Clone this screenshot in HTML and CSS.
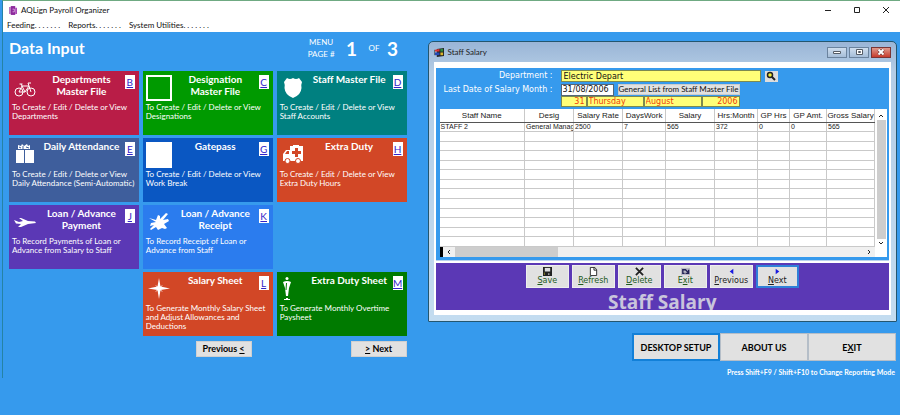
FILE: index.html
```html
<!DOCTYPE html>
<html lang="en">
<head>
<meta charset="utf-8">
<title>AQLign Payroll Organizer</title>
<link rel="stylesheet" href="styles.css">
</head>
<body>
<div class="app">
  <header class="titlebar">
    <svg class="app-icon" viewBox="0 0 9 10"><path fill="#b67bc0" d="M0 1h2v8H0z"/><path fill="#8d2a9c" d="M2 0h5v10H2z"/><path fill="#a846b5" d="M7 2h2v7H7z"/><path fill="none" stroke="#d9a8e0" d="M4 3.500h2v3H4"/></svg>
    <span class="app-name">AQLign Payroll Organizer</span>
    <button class="caption" aria-label="Minimize"><svg viewBox="0 0 8 8"><path d="M1 4.500h6"/></svg></button>
    <button class="caption" aria-label="Maximize"><svg viewBox="0 0 8 8"><path d="M1.500 1.500h5v5h-5z"/></svg></button>
    <button class="caption" aria-label="Close"><svg viewBox="0 0 8 8"><path d="M1 1l6 6M7 1l-6 6"/></svg></button>
  </header>
  <nav class="menubar">
    <a href="#feeding">Feeding. . . . . . .</a><a href="#reports">Reports. . . . . . .</a><a href="#utilities">System Utilities. . . . . . .</a>
  </nav>
  <main class="desktop">
    <section class="menu">
      <div class="menu-head">
        <h1>Data Input</h1>
        <div class="page-label">MENU<br>PAGE #</div>
        <b class="page-num">1</b>
        <span class="page-of">OF</span>
        <b class="page-num">3</b>
      </div>
      <div class="tiles">
        <article class="tile crimson">
          <svg class="tile-icon" viewBox="0 0 26 26"><g fill="none" stroke="#fff"><circle cx="7" cy="17" r="4"/><circle cx="19" cy="17" r="4"/><path d="M7 17l3-6h7l-4 6H7M13 17l-4-8M7.500 9h3M19 17l-3-9h3"/></g></svg>
          <h2>Departments<br>Master File</h2><a class="key" href="#b">B</a>
          <p>To Create / Edit / Delete or View<br>Departments</p>
        </article>
        <article class="tile green">
          <svg class="tile-icon" viewBox="0 0 26 26"><path fill="none" stroke="#fff" stroke-width="2" d="M1 1h24v24H1z"/></svg>
          <h2>Designation<br>Master File</h2><a class="key" href="#c">C</a>
          <p>To Create / Edit / Delete or View<br>Designations</p>
        </article>
        <article class="tile teal">
          <svg class="tile-icon" viewBox="0 0 26 26"><path fill="#fff" d="M7 3q3 2 6 0 3 2 6 0l3 4q-1 2-.5 6-.5 7-8.500 10Q5 20 4.500 13 5 9 4 7z"/></svg>
          <h2>Staff Master File</h2><a class="key" href="#d">D</a>
          <p>To Create / Edit / Delete or View<br>Staff Accounts</p>
        </article>
        <article class="tile slate">
          <svg class="tile-icon" viewBox="0 0 26 26"><path fill="#fff" d="M4 8h8v13H4zM13 8h9v13h-9zM6 3l3 1 1-2 2 2 3-2 1 2 2-1v4H6z"/><path stroke="#3e5e9c" fill="none" d="M7 5l2 1M11 4v3M14 5l3 1"/></svg>
          <h2>Daily Attendance</h2><a class="key" href="#e">E</a>
          <p>To Create / Edit / Delete or View<br>Daily Attendance (Semi-Automatic)</p>
        </article>
        <article class="tile blue">
          <svg class="tile-icon" viewBox="0 0 26 26"><path fill="#fff" d="M0 0h26v26H0z"/></svg>
          <h2>Gatepass</h2><a class="key" href="#g">G</a>
          <p>To Create / Edit / Delete or View<br>Work Break</p>
        </article>
        <article class="tile orange">
          <svg class="tile-icon" viewBox="0 0 26 26"><path fill="#fff" d="M10 4h3V3h6v1h4v15H3v-7l3-4h4z"/><path fill="#d24726" d="M15 6h3v3h3v3h-3v3h-3v-3h-3V9h3zM5 12l2-3h2v3z"/><circle cx="7.500" cy="19" r="2.500" fill="#fff" stroke="#d24726"/><circle cx="18" cy="19" r="2.500" fill="#fff" stroke="#d24726"/></svg>
          <h2>Extra Duty</h2><a class="key" href="#h">H</a>
          <p>To Create / Edit / Delete or View<br>Extra Duty Hours</p>
        </article>
        <article class="tile violet">
          <svg class="tile-icon" viewBox="0 0 26 26"><path fill="#fff" d="M2 11l5 2 4-1-4-3h2l7 3 7 .5 1 1.500-8 1-7 3h-3l3-3-5-.5z"/></svg>
          <h2>Loan / Advance<br>Payment</h2><a class="key" href="#j">J</a>
          <p>To Record Payments of Loan or<br>Advance from Salary to Staff</p>
        </article>
        <article class="tile azure">
          <svg class="tile-icon" viewBox="0 0 26 26"><path fill="#fff" d="M3 9l7 2 2-5 2 1v3l6-6 2 1-5 6 5-1 1 2-5 3 3 4-2 1-3-1-4 2-2-3-5 3-1-1 4-4-4 1 1-3 5-1z"/></svg>
          <h2>Loan / Advance<br>Receipt</h2><a class="key" href="#k">K</a>
          <p>To Record Receipt of Loan or<br>Advance from Staff</p>
        </article>
        <article class="tile orange salary">
          <svg class="tile-icon" viewBox="0 0 26 26"><path fill="#fff" d="M13 2l1.500 8.500L24 12.500 14.500 14 13 23l-1.500-9L2 12.500l9.500-2z"/><path stroke="#fff" d="M10 9.500l6 6M16 9.500l-6 6"/></svg>
          <h2>Salary Sheet</h2><a class="key" href="#l">L</a>
          <p>To Generate Monthly Salary Sheet<br>and Adjust Allowances and<br>Deductions</p>
        </article>
        <article class="tile forest">
          <svg class="tile-icon" viewBox="0 0 26 26"><circle cx="7" cy="2.500" r="1.500" fill="#fff"/><path fill="#fff" d="M3 6q4-2 8 0l-2 6-1 8H6l-1-8zM6 22h2v1h2v1H4v-1h2z"/><path stroke="#007a00" d="M6.500 7l-.5 7"/></svg>
          <h2>Extra Duty Sheet</h2><a class="key" href="#m">M</a>
          <p>To Generate Monthly Overtime<br>Paysheet</p>
        </article>
      </div>
      <div class="pager">
        <button>Previous <u>&lt;</u></button>
        <button><u>&gt;</u> Next</button>
      </div>
    </section>

    <div class="side">
      <section class="window">
        <div class="win-title">
          <svg class="win-icon" viewBox="0 0 12 10"><path fill="#222" d="M3 1l8-1v9l-8 1z"/><path fill="#d33" d="M1 2l5-1v3H1z"/><path fill="#2b8a3e" d="M7 1h3v3H7z"/><path fill="#2449b5" d="M1 5h5v3H1z"/><path fill="#d9b62a" d="M7 5h3v3H7z"/><path stroke="#222" d="M0 2v6"/></svg>
          <span>Staff Salary</span>
          <button class="ctl" aria-label="Minimize"><svg viewBox="0 0 10 8"><path fill="#fff" stroke="#555c66" d="M1.500 3.500h7v2h-7z"/></svg></button>
          <button class="ctl" aria-label="Restore"><svg viewBox="0 0 10 8"><path fill="#fff" stroke="#555c66" d="M2.500 1.500h6v5h-6zM4.500 3.500h2v1h-2z"/></svg></button>
          <button class="ctl close" aria-label="Close"><svg viewBox="0 0 10 8"><path fill="none" stroke="#5a2a2a" stroke-width="3" d="M2.500 1.500l5 5M7.500 1.500l-5 5"/><path fill="none" stroke="#fff" stroke-width="2" d="M2.500 1.500l5 5M7.500 1.500l-5 5"/></svg></button>
        </div>
        <div class="win-body">
          <div class="form-panel">
            <form class="fields">
              <label for="dept">Department :</label>
              <div class="line">
                <input id="dept" class="yellow dept" value="Electric Depart">
                <button type="button" class="find" aria-label="Find"><svg viewBox="0 0 12 10"><circle cx="5" cy="4" r="2.500" fill="#f5ee30" stroke="#222" stroke-width="1.500"/><path stroke="#222" stroke-width="2" d="M7 6l3 3"/></svg></button>
              </div>
              <label for="date">Last Date of Salary Month :</label>
              <div class="line">
                <input id="date" class="date" value="31/08/2006">
                <button type="button" class="list">General List from Staff Master File</button>
              </div>
              <div class="line parts">
                <input class="yellow right" aria-label="Day" value="31"><input class="yellow" aria-label="Weekday" value="Thursday"><input class="yellow" aria-label="Month" value="August"><input class="yellow right" aria-label="Year" value="2006">
              </div>
            </form>
            <div class="grid">
              <table>
                <colgroup><col class="c-name"><col class="c-desig"><col class="c-rate"><col class="c-days"><col class="c-salary"><col class="c-hrs"><col class="c-gph"><col class="c-gpa"><col class="c-gross"></colgroup>
                <thead><tr><th>Staff Name</th><th>Desig</th><th>Salary Rate</th><th>DaysWork</th><th>Salary</th><th>Hrs:Month</th><th>GP Hrs</th><th>GP Amt.</th><th>Gross Salary</th></tr></thead>
                <tbody>
                  <tr><td>STAFF 2</td><td>General Manag</td><td>2500</td><td>7</td><td>565</td><td>372</td><td>0</td><td>0</td><td>565</td></tr>
                  <tr><td></td><td></td><td></td><td></td><td></td><td></td><td></td><td></td><td></td></tr>
                  <tr><td></td><td></td><td></td><td></td><td></td><td></td><td></td><td></td><td></td></tr>
                  <tr><td></td><td></td><td></td><td></td><td></td><td></td><td></td><td></td><td></td></tr>
                  <tr><td></td><td></td><td></td><td></td><td></td><td></td><td></td><td></td><td></td></tr>
                  <tr><td></td><td></td><td></td><td></td><td></td><td></td><td></td><td></td><td></td></tr>
                  <tr><td></td><td></td><td></td><td></td><td></td><td></td><td></td><td></td><td></td></tr>
                  <tr><td></td><td></td><td></td><td></td><td></td><td></td><td></td><td></td><td></td></tr>
                  <tr><td></td><td></td><td></td><td></td><td></td><td></td><td></td><td></td><td></td></tr>
                  <tr><td></td><td></td><td></td><td></td><td></td><td></td><td></td><td></td><td></td></tr>
                  <tr><td></td><td></td><td></td><td></td><td></td><td></td><td></td><td></td><td></td></tr>
                  <tr><td></td><td></td><td></td><td></td><td></td><td></td><td></td><td></td><td></td></tr>
                  <tr><td></td><td></td><td></td><td></td><td></td><td></td><td></td><td></td><td></td></tr>
                </tbody>
              </table>
              <div class="vbar">
                <svg viewBox="0 0 8 8"><path d="M2 5l2-2 2 2"/></svg>
                <div class="vthumb"></div>
                <svg viewBox="0 0 8 8"><path d="M2 3l2 2 2-2"/></svg>
              </div>
              <div class="hbar">
                <div class="split"></div>
                <svg viewBox="0 0 8 8"><path d="M5 2L3 4l2 2"/></svg>
                <div class="hthumb"></div>
                <svg class="end" viewBox="0 0 8 8"><path d="M3 2l2 2-2 2"/></svg>
              </div>
            </div>
          </div>
          <div class="actions-panel">
            <div class="actions">
              <button><svg viewBox="0 0 10 10"><path fill="#222" d="M0 0h10v10H0z"/><path fill="#ddd" d="M2 1h6v4H2z"/><path fill="#8a8428" d="M1 6h1v3H1z"/><path fill="#eee" d="M6 7h1v2H6z"/></svg><span><u>S</u>ave</span></button>
              <button><svg viewBox="0 0 10 10"><path fill="#fff" stroke="#222" d="M1.500.5h5l2 2.500v6.500h-7zM5.500.5v3h3"/></svg><span><u>R</u>efresh</span></button>
              <button><svg viewBox="0 0 10 10"><path stroke="#222" stroke-width="2" d="M1 1l8 8M9 1L1 9"/></svg><span><u>D</u>elete</span></button>
              <button><svg viewBox="0 0 10 10"><path fill="#b8b8c4" d="M0 1h10v8H0z"/><path fill="none" stroke="#225" stroke-width="1.500" d="M4 7H2V3h3l3 3M8.500 3v4H5"/></svg><span>E<u>x</u>it</span></button>
              <button class="dark"><svg viewBox="0 0 10 10"><path fill="#1a1ae0" d="M7 2v6L3 5z"/></svg><span><u>P</u>revious</span></button>
              <button class="dark focus"><svg viewBox="0 0 10 10"><path fill="#1a1ae0" d="M3 2v6l4-3z"/></svg><span><u>N</u>ext</span></button>
            </div>
            <div class="caption-text">Staff Salary</div>
          </div>
        </div>
      </section>
      <div class="bottom-buttons">
        <button class="selected">DESKTOP SETUP</button>
        <button>ABOUT US</button>
        <button>E<u>X</u>IT</button>
      </div>
      <p class="hint">Press Shift+F9 / Shift+F10 to Change Reporting Mode</p>
    </div>
  </main>
</div>
</body>
</html>
```
FILE: styles.css
```css
* { box-sizing: border-box; }

body {
  margin: 0;
  background: #369aed;
  font-family: Lato, "Open Sans", sans-serif;
  color: #fff;
}

button, input { font: inherit; margin: 0; padding: 0; border-radius: 0; }
h1, h2, p { margin: 0; }
svg { display: block; }

.app {
  margin-left: 2px;
  border-left: 1px solid #2583a5;
  border-top: 1px solid #6faa82;
}

.titlebar {
  display: flex;
  align-items: center;
  height: 18px;
  padding-left: 6px;
  background: #fff;
  color: #111;
  font-size: 8px;
}
.app-icon { width: 8px; height: 9px; }
.app-name { flex: 1; padding-left: 4px; }
.caption {
  width: 29px;
  height: 18px;
  border: 0;
  background: none;
}
.caption svg { width: 8px; height: 8px; margin: 0 auto; fill: none; stroke: #222; }

.menubar {
  display: flex;
  gap: 8px;
  height: 13px;
  padding-left: 4px;
  background: #fff;
  font-size: 8px;
  line-height: 13px;
}
.menubar a { color: #111; text-decoration: none; }

.desktop {
  display: grid;
  grid-template-columns: minmax(0, 398fr) minmax(0, 470fr);
  column-gap: 21px;
  padding: 0 3px 0 6px;
}

.menu-head {
  display: flex;
  align-items: center;
  height: 39px;
  padding-bottom: 7px;
}
.menu-head h1 { flex: 1; font-size: 16px; line-height: 20px; }
.page-label { font-size: 8px; line-height: 12px; text-align: center; }
.page-num { width: 34px; font-size: 19px; text-align: center; }
.page-of { width: 10px; font-size: 8px; }
.page-num:last-child { width: 28px; }

.tiles {
  display: grid;
  grid-template-columns: repeat(3, minmax(0, 1fr));
  grid-auto-rows: 64px;
  gap: 3px 4px;
}
.tile {
  display: grid;
  grid-template-columns: 26px minmax(0, 1fr) 10px;
  grid-template-rows: 29px auto;
  column-gap: 4px;
  padding: 2px 4px 0 3px;
}
.tile-icon { width: 26px; height: 26px; margin-top: 2px; }
.tile h2 { font-size: 10px; line-height: 12px; text-align: center; white-space: nowrap; }
.tile p { grid-column: 1 / -1; font-size: 8px; line-height: 9px; padding-top: 1px; white-space: nowrap; }
.key {
  height: 14px;
  margin-top: 2px;
  background: #fff;
  color: #3323c8;
  font-size: 10px;
  line-height: 14px;
  text-align: center;
}
.salary { grid-column: 2; }
.crimson { background: #b91d47; }
.green { background: #009a00; }
.teal { background: #008080; }
.slate { background: #3e5e9c; }
.blue { background: #0a57c2; }
.orange { background: #d24726; }
.violet { background: #5b38b5; }
.azure { background: #2b7cee; }
.forest { background: #007a00; }

.pager { display: flex; justify-content: flex-end; gap: 99px; padding-top: 5px; }
.pager button {
  width: 56px;
  height: 16px;
  border: 1px solid #d0d0d0;
  background: #e1e1e1;
  color: #000;
  font-size: 9px;
  font-weight: bold;
  line-height: 14px;
}

.window {
  margin-top: 9px;
  padding: 0 5px 6px;
  border: 1px solid #24566f;
  border-radius: 5px 5px 1px 1px;
  background: linear-gradient(#9ab5d6, #b4cde6 30px, #c3dcf0);
}
.win-title {
  display: flex;
  align-items: center;
  height: 20px;
  color: #222;
  font-size: 8px;
}
.win-icon { width: 11px; height: 9px; margin-right: 3px; }
.win-title span { flex: 1; }
.ctl {
  width: 20px;
  height: 11px;
  margin-left: 2px;
  border: 1px solid #6b839e;
  background: linear-gradient(#cfdeee, #a5bdd8);
}
.ctl svg { width: 10px; height: 8px; margin: 0 auto; }
.close { border-color: #7a3535; background: linear-gradient(#e09a8c, #c63b2c); }

.win-body { padding: 6px 2px 5px; background: #fff; }
.form-panel { padding: 1px 2px 3px 4px; border-bottom: 1px solid #b9d3ee; background: #369aed; }

.fields {
  display: grid;
  grid-template-columns: 121px 1fr;
  grid-template-rows: 14px 13px 11px;
  margin-bottom: 2px;
  font-family: "DejaVu Sans", sans-serif;
  font-size: 8px;
}
.fields label { padding-right: 8px; text-align: right; line-height: 14px; white-space: nowrap; }
.line { display: flex; align-items: center; }
.fields input {
  height: 12px;
  min-width: 0;
  padding: 0 2px;
  border: 1px solid #7c8a50;
  background: #fff;
  color: #111;
}
.fields .yellow { background: #ffff78; }
.fields .dept { width: 200px; }
.fields .date { width: 53px; padding: 0 1px; border-color: #567; }
.find { width: 13px; height: 11px; margin-left: 4px; border: 0; background: #ddd; }
.find svg { width: 12px; height: 10px; }
.list {
  width: 122px;
  height: 11px;
  margin-left: 4px;
  border: 1px solid #ccc;
  background: #e1e1e1;
  color: #111;
  font-family: Lato, sans-serif;
  line-height: 9px;
  white-space: nowrap;
}
.parts {
  grid-column: 2;
  display: grid;
  grid-template-columns: 26px 57px 58px 38px;
}
.fields .parts input { height: 11px; padding: 0 1px; color: #f0400a; }
.fields .parts .right { text-align: right; }

.grid {
  display: grid;
  grid-template-columns: minmax(0, 1fr) 12px;
  background: #fff;
  color: #222;
  font-family: "Liberation Sans", sans-serif;
}
table { width: 100%; height: 138px; border-collapse: collapse; table-layout: fixed; }
th, td {
  height: 9px;
  padding: 0;
  border-right: 1px solid #c9c9c9;
  border-bottom: 1px solid #c9c9c9;
  overflow: hidden;
  white-space: nowrap;
}
th { height: 13px; font-size: 8px; font-weight: normal; line-height: 11px; border-bottom-color: #555; }
td { padding-left: 1px; font-size: 7px; line-height: 8px; }
.c-name { width: 85px; }
.c-desig { width: 49px; }
.c-rate { width: 49px; }
.c-days { width: 43px; }
.c-salary { width: 49px; }
.c-hrs { width: 43px; }
.c-gph { width: 32px; }
.c-gpa { width: 37px; }
.vbar { display: flex; flex-direction: column; align-items: center; padding-top: 3px; }
.vbar svg, .hbar svg { width: 8px; height: 8px; fill: none; stroke: #222; }
.vthumb { flex: 1; width: 9px; background: #cdcdcd; }
.hbar { display: flex; align-items: center; height: 10px; background: #f0f0f0; }
.split { width: 3px; height: 10px; background: #000; }
.hbar svg { margin: 0 2px; }
.hthumb { width: 103px; height: 10px; background: #cdcdcd; }
.hbar .end { margin-left: auto; }

.actions-panel { height: 47px; margin-top: 2px; overflow: hidden; background: #5b38b5; text-align: center; }
.actions { display: flex; justify-content: center; gap: 3px; padding-top: 2px; }
.actions button {
  display: flex;
  flex-direction: column;
  align-items: center;
  width: 43px;
  height: 23px;
  padding-top: 1px;
  border: 1px solid #eee;
  background: #e1e1e1;
  color: #1d5a1d;
  font-family: "DejaVu Sans", sans-serif;
  font-size: 8px;
  line-height: 10px;
}
.actions svg { width: 9px; height: 9px; }
.actions .dark { color: #222; }
.actions .focus { border: 2px solid #2f80d8; padding-top: 0; }
.caption-text {
  color: #c9c5dc;
  font-family: "Open Sans", sans-serif;
  font-size: 19px;
  font-weight: bold;
  line-height: 28px;
}

.bottom-buttons {
  display: grid;
  grid-template-columns: repeat(3, 88px);
  justify-content: end;
  margin: 11px 1px 0 0;
}
.bottom-buttons button {
  height: 28px;
  border: 1px solid #b5bec8;
  background: #e1e1e1;
  color: #000;
  font-size: 9px;
  font-weight: bold;
}
.bottom-buttons .selected { border: 2px solid #1280d8; }
.hint { padding: 5px 2px 0 0; font-size: 7px; font-weight: bold; line-height: 12px; text-align: right; }
```
